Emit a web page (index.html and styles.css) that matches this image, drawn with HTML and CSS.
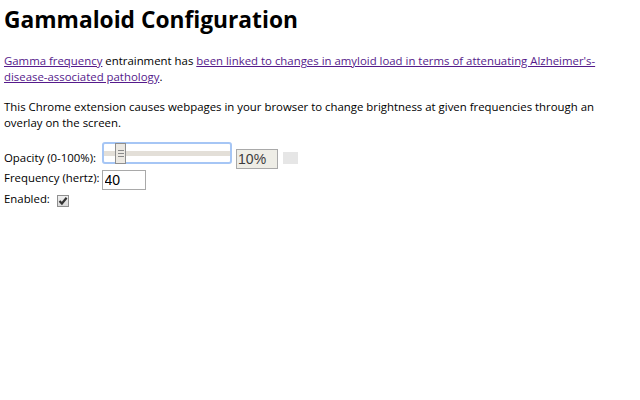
FILE: index.html
```html
<!DOCTYPE html>
<html lang="en">
<head>
<meta charset="utf-8">
<title>Gammaloid Configuration</title>
<link rel="stylesheet" href="styles.css">
</head>
<body>
<h1 class="title">Gammaloid Configuration</h1>
<p class="para para-first"><a class="link" href="#">Gamma frequency</a> entrainment has <a class="link" href="#">been linked to changes in amyloid load in terms of attenuating Alzheimer's-disease-associated pathology</a>.</p>
<p class="para para-second">This Chrome extension causes webpages in your browser to change brightness at given frequencies through an overlay on the screen.</p>
<div class="row row-opacity">
  <span class="label label-opacity">Opacity (0-100%):</span>
  <div class="slider" role="slider" aria-valuemin="0" aria-valuemax="100" aria-valuenow="10">
    <div class="track"></div>
    <div class="thumb" style="left: 11px"><span class="grip"></span><span class="grip"></span><span class="grip"></span></div>
  </div>
  <span class="pct">10%</span>
  <span class="swatch"></span>
</div>
<div class="row row-frequency">
  <span class="label">Frequency (hertz):</span>
  <input class="freq" type="text" value="40">
</div>
<div class="row row-enabled">
  <span class="label label-enabled">Enabled:</span>
  <span class="check" role="checkbox" aria-checked="true">
    <svg width="10" height="10" viewBox="0 0 10 10"><path d="M1.5 5 L3.9 7.5 L8.6 1.8" fill="none" stroke="#333333" stroke-width="2.2"/></svg>
  </span>
</div>
</body>
</html>
```
FILE: styles.css
```css
html, body {
  background: #ffffff;
}
body {
  margin: 0;
  padding: 4px;
  font-family: "Open Sans", "Noto Sans", sans-serif;
  font-size: 11.4px;
  line-height: 16px;
  color: #000000;
}
.title {
  margin: 0;
  font-size: 22.75px;
  line-height: 32px;
  font-weight: 700;
}
.para {
  margin: 0;
  max-width: 600px;
}
.para-first {
  margin-top: 17px;
}
.para-second {
  margin-top: 14px;
}
.link {
  color: #551a8b;
  text-decoration: underline;
}
.row {
  display: flex;
  align-items: flex-start;
}
.row-opacity {
  margin-top: 11px;
}
.row-frequency {
  margin-top: 1px;
}
.label {
  white-space: nowrap;
}
.label-opacity {
  margin-top: 8px;
}
.label-enabled {
  margin-top: 1px;
}
.slider {
  position: relative;
  box-sizing: border-box;
  width: 130px;
  height: 22px;
  margin-left: 6px;
  border: 2px solid #a6c6f5;
  border-radius: 3px;
  background: #ffffff;
  display: flex;
  align-items: center;
}
.track {
  flex: 1;
  height: 5px;
  background: #e3dfd8;
}
.thumb {
  position: absolute;
  top: -1px;
  box-sizing: border-box;
  width: 11px;
  height: 21px;
  border: 1px solid #8f8f8f;
  background: #ece9e3;
  display: flex;
  flex-direction: column;
  align-items: center;
  justify-content: center;
  gap: 2px;
}
.grip {
  display: block;
  width: 6px;
  height: 1px;
  background: #8a8a8a;
}
.pct {
  box-sizing: border-box;
  width: 42px;
  height: 20px;
  margin-top: 7px;
  margin-left: 4px;
  padding: 0 1px;
  border: 1px solid #a9a9a9;
  background: #eeede6;
  font-family: "Liberation Sans", Arial, sans-serif;
  font-size: 14px;
  line-height: 19px;
  color: #3c3c3c;
}
.swatch {
  width: 15px;
  height: 12px;
  margin-top: 10px;
  margin-left: 5px;
  background: #e6e6e6;
}
.freq {
  box-sizing: border-box;
  width: 44px;
  height: 20px;
  margin: 0 0 0 2px;
  padding: 0 2px;
  border: 1px solid #a9a9a9;
  border-radius: 0;
  background: #ffffff;
  font-family: "Liberation Sans", Arial, sans-serif;
  font-size: 14px;
  color: #000000;
  outline: none;
}
.check {
  box-sizing: border-box;
  width: 12px;
  height: 12px;
  margin-top: 5px;
  margin-left: 7px;
  border: 1px solid #8f8f8f;
  background: linear-gradient(#f0f0f0, #d9d9d9);
  display: flex;
  align-items: center;
  justify-content: center;
}
.check svg {
  display: block;
}
```
